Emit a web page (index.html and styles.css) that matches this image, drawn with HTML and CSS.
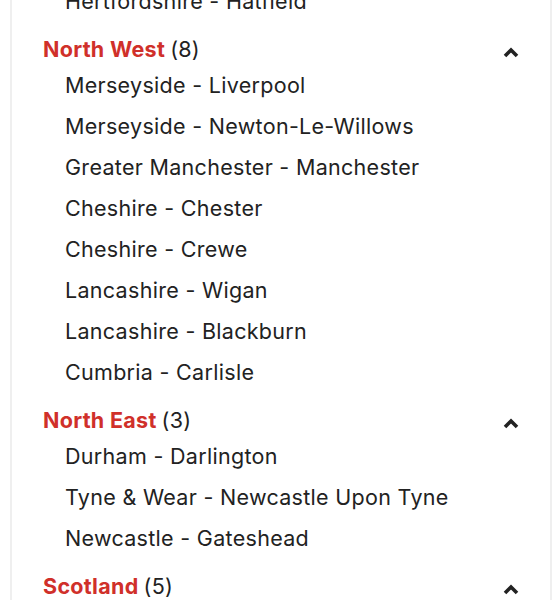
FILE: index.html
```html
<!DOCTYPE html>
<html lang="en">
<head>
  <meta charset="UTF-8">
  <meta name="viewport" content="width=device-width, initial-scale=1.0">
  <title>Locations</title>
  <link rel="stylesheet" href="styles.css">
</head>
<body>
  <div class="card">
    <!-- fin du groupe précédent -->
    <ul class="items">
      <li>Hertfordshire - Hatfield</li>
    </ul>

    <div class="group">
      <div class="group-head">
        <span class="region">North West</span> <span class="count">(8)</span>
        <svg class="chevron" width="16" height="11" viewBox="0 0 16 11"><path d="M2 9 L8 3 L14 9" fill="none" stroke="#222" stroke-width="3.6"/></svg>
      </div>
      <ul class="items">
        <li>Merseyside - Liverpool</li>
        <li>Merseyside - Newton-Le-Willows</li>
        <li>Greater Manchester - Manchester</li>
        <li>Cheshire - Chester</li>
        <li>Cheshire - Crewe</li>
        <li>Lancashire - Wigan</li>
        <li>Lancashire - Blackburn</li>
        <li>Cumbria - Carlisle</li>
      </ul>
    </div>

    <div class="group">
      <div class="group-head">
        <span class="region">North East</span> <span class="count">(3)</span>
        <svg class="chevron" width="16" height="11" viewBox="0 0 16 11"><path d="M2 9 L8 3 L14 9" fill="none" stroke="#222" stroke-width="3.6"/></svg>
      </div>
      <ul class="items">
        <li>Durham - Darlington</li>
        <li>Tyne &amp; Wear - Newcastle Upon Tyne</li>
        <li>Newcastle - Gateshead</li>
      </ul>
    </div>

    <div class="group">
      <div class="group-head">
        <span class="region">Scotland</span> <span class="count">(5)</span>
        <svg class="chevron" width="16" height="11" viewBox="0 0 16 11"><path d="M2 9 L8 3 L14 9" fill="none" stroke="#222" stroke-width="3.6"/></svg>
      </div>
      <ul class="items">
        <li>Edinburgh</li>
        <li>Glasgow</li>
      </ul>
    </div>
  </div>
</body>
</html>
```

FILE: styles.css
```css
body {
  margin: 0;
  background: #fff;
  font-family: Inter, "Open Sans", sans-serif;
  color: #222;
  overflow: hidden;
}
/* Carte avec bordures grises légères */
.card {
  margin: -19px 4px 0 10px;
  border-left: 2px solid #efefef;
  border-right: 2px solid #efefef;
  padding: 0 31px 0 31px;
}
.items {
  list-style: none;
  margin: 0;
  padding: 0 0 10px 22px;
}
.items li {
  font-size: 21.5px;
  letter-spacing: 0.3px;
  line-height: 41px;
  white-space: nowrap;
}
.group-head {
  display: flex;
  align-items: center;
  height: 33px;
  font-size: 21.5px;
  letter-spacing: 0.3px;
}
.region {
  color: #d0302a;
  font-weight: bold;
}
.count {
  margin-left: 5px;
}
.chevron {
  margin-left: auto;
  margin-top: 8px;
}
```
